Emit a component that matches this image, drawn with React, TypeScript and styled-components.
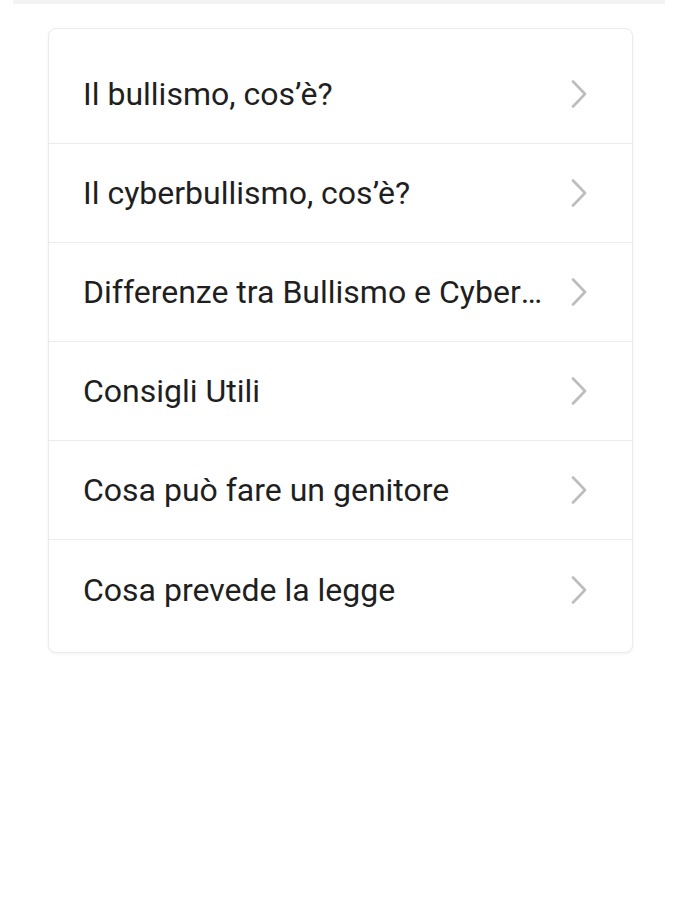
import React from "react";
import styled, { createGlobalStyle } from "styled-components";

const GlobalStyle = createGlobalStyle`
    html, body {
        margin: 0;
        padding: 0;
        background: #ffffff;
        font-family: Roboto, "Noto Sans", sans-serif;
    }
`;

const Page = styled.div`
    width: 675px;
    min-height: 900px;
    background: #fff;
    display: flex;
    flex-direction: column;
    align-items: flex-start;
`;

const TopBar = styled.div`
    width: 652px;
    height: 4px;
    margin-left: 13px;
    background: #f3f3f3;
`;

const Card = styled.div`
    width: 583px;
    margin: 24px 0 0 48px;
    padding: 16px 0 13px;
    border: 1px solid #ebebeb;
    border-radius: 8px;
    box-shadow: 0 1px 3px rgba(0, 0, 0, 0.06);
    background: #fff;
`;

const Row = styled.div<{ $last?: boolean }>`
    height: ${(p) => (p.$last ? "99px" : "98px")};
    display: flex;
    align-items: center;
    padding: 0 45px 0 34px;
    border-bottom: ${(p) => (p.$last ? "none" : "1px solid #ececec")};
    cursor: pointer;
`;

const Label = styled.span`
    flex: 1;
    min-width: 0;
    font-size: 32px;
    color: #1f1f1f;
    white-space: nowrap;
    overflow: hidden;
    text-overflow: ellipsis;
    padding-right: 26px;
`;

const Chevron = () => (
    <svg width="16" height="28" viewBox="0 0 16 28" fill="none">
        <path
            d="M2 1.5 L14 14 L2 26.5"
            stroke="#bdbdbd"
            strokeWidth="2.6"
            strokeLinecap="round"
            strokeLinejoin="round"
        />
    </svg>
);

const items = [
    "Il bullismo, cos’è?",
    "Il cyberbullismo, cos’è?",
    "Differenze tra Bullismo e Cyberbullismo",
    "Consigli Utili",
    "Cosa può fare un genitore",
    "Cosa prevede la legge",
];

const App = () => {
    return (
        <>
            <GlobalStyle />
            <Page>
                <TopBar />
                <Card>
                    {items.map((text, index) => (
                        <Row key={index} $last={index === items.length - 1}>
                            <Label>{text}</Label>
                            <Chevron />
                        </Row>
                    ))}
                </Card>
            </Page>
        </>
    );
};

export default App;
